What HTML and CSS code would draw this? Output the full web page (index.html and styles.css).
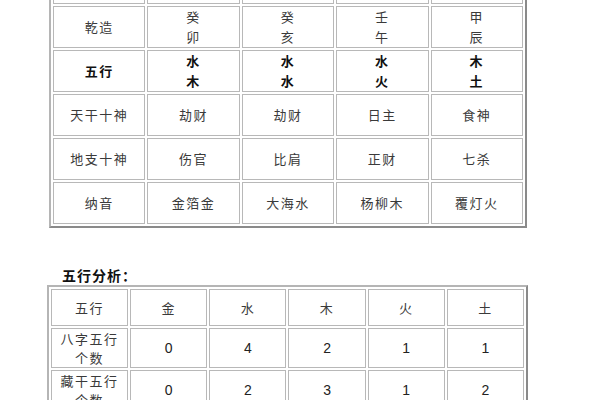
FILE: index.html
```html
<!DOCTYPE html>
<html lang="zh">
<head>
<meta charset="utf-8">
<link rel="stylesheet" href="styles.css">
</head>
<body>
<div class="page">
  <table class="grid bazi">
    <tr class="cut"><td></td><td></td><td></td><td></td><td></td></tr>
    <tr><td>乾造</td><td>癸<br>卯</td><td>癸<br>亥</td><td>壬<br>午</td><td>甲<br>辰</td></tr>
    <tr class="bold"><td>五行</td><td>水<br>木</td><td>水<br>水</td><td>水<br>火</td><td>木<br>土</td></tr>
    <tr><td>天干十神</td><td>劫财</td><td>劫财</td><td>日主</td><td>食神</td></tr>
    <tr><td>地支十神</td><td>伤官</td><td>比肩</td><td>正财</td><td>七杀</td></tr>
    <tr><td>纳音</td><td>金箔金</td><td>大海水</td><td>杨柳木</td><td>覆灯火</td></tr>
  </table>

  <h3 class="title">五行分析：</h3>

  <table class="grid wuxing">
    <tr class="head"><td>五行</td><td>金</td><td>水</td><td>木</td><td>火</td><td>土</td></tr>
    <tr><td class="lbl">八字五行<br>个数</td><td class="num">0</td><td class="num">4</td><td class="num">2</td><td class="num">1</td><td class="num">1</td></tr>
    <tr><td class="lbl">藏干五行<br>个数</td><td class="num">0</td><td class="num">2</td><td class="num">3</td><td class="num">1</td><td class="num">2</td></tr>
  </table>
</div>
</body>
</html>
```

FILE: styles.css
```css
html, body {
  margin: 0;
  padding: 0;
  background: #fff;
  overflow: hidden;
}
body {
  font-family: "Noto Sans CJK SC", "Noto Sans", sans-serif;
  color: #3a3a3a;
}
.page {
  width: 600px;
  height: 400px;
  overflow: hidden;
}
.grid {
  border-collapse: separate;
  border-spacing: 2px;
  table-layout: fixed;
  border-top: 2px solid #b5b5b5;
  border-left: 2px solid #b5b5b5;
  border-right: 2px solid #8a8a8a;
  border-bottom: 2px solid #8a8a8a;
}
.grid td {
  border: 1px solid #b8b8b8;
  text-align: center;
  vertical-align: middle;
  padding: 0;
  font-size: 13px;
  letter-spacing: 1.5px;
  line-height: 20px;
}
.bazi {
  width: 478px;
  margin: -40px 0 0 49px;
}
.bazi td {
  height: 40px;
}
.bazi tr.cut td {
  height: 38px;
}
.bazi tr.bold td {
  color: #111;
  font-weight: bold;
}
.title {
  margin: 38px 0 0 62px;
  font-size: 14px;
  font-weight: bold;
  color: #111;
  line-height: 19px;
  letter-spacing: 1px;
}
.wuxing {
  width: 481px;
  margin-left: 47px;
}
.wuxing tr.head td {
  height: 35px;
}
.wuxing td {
  height: 38px;
}
.wuxing td.lbl {
  line-height: 19px;
}
.wuxing td.num {
  font-family: "Liberation Sans", Arial, sans-serif;
  font-size: 14px;
  letter-spacing: 0;
  color: #222;
}
```
